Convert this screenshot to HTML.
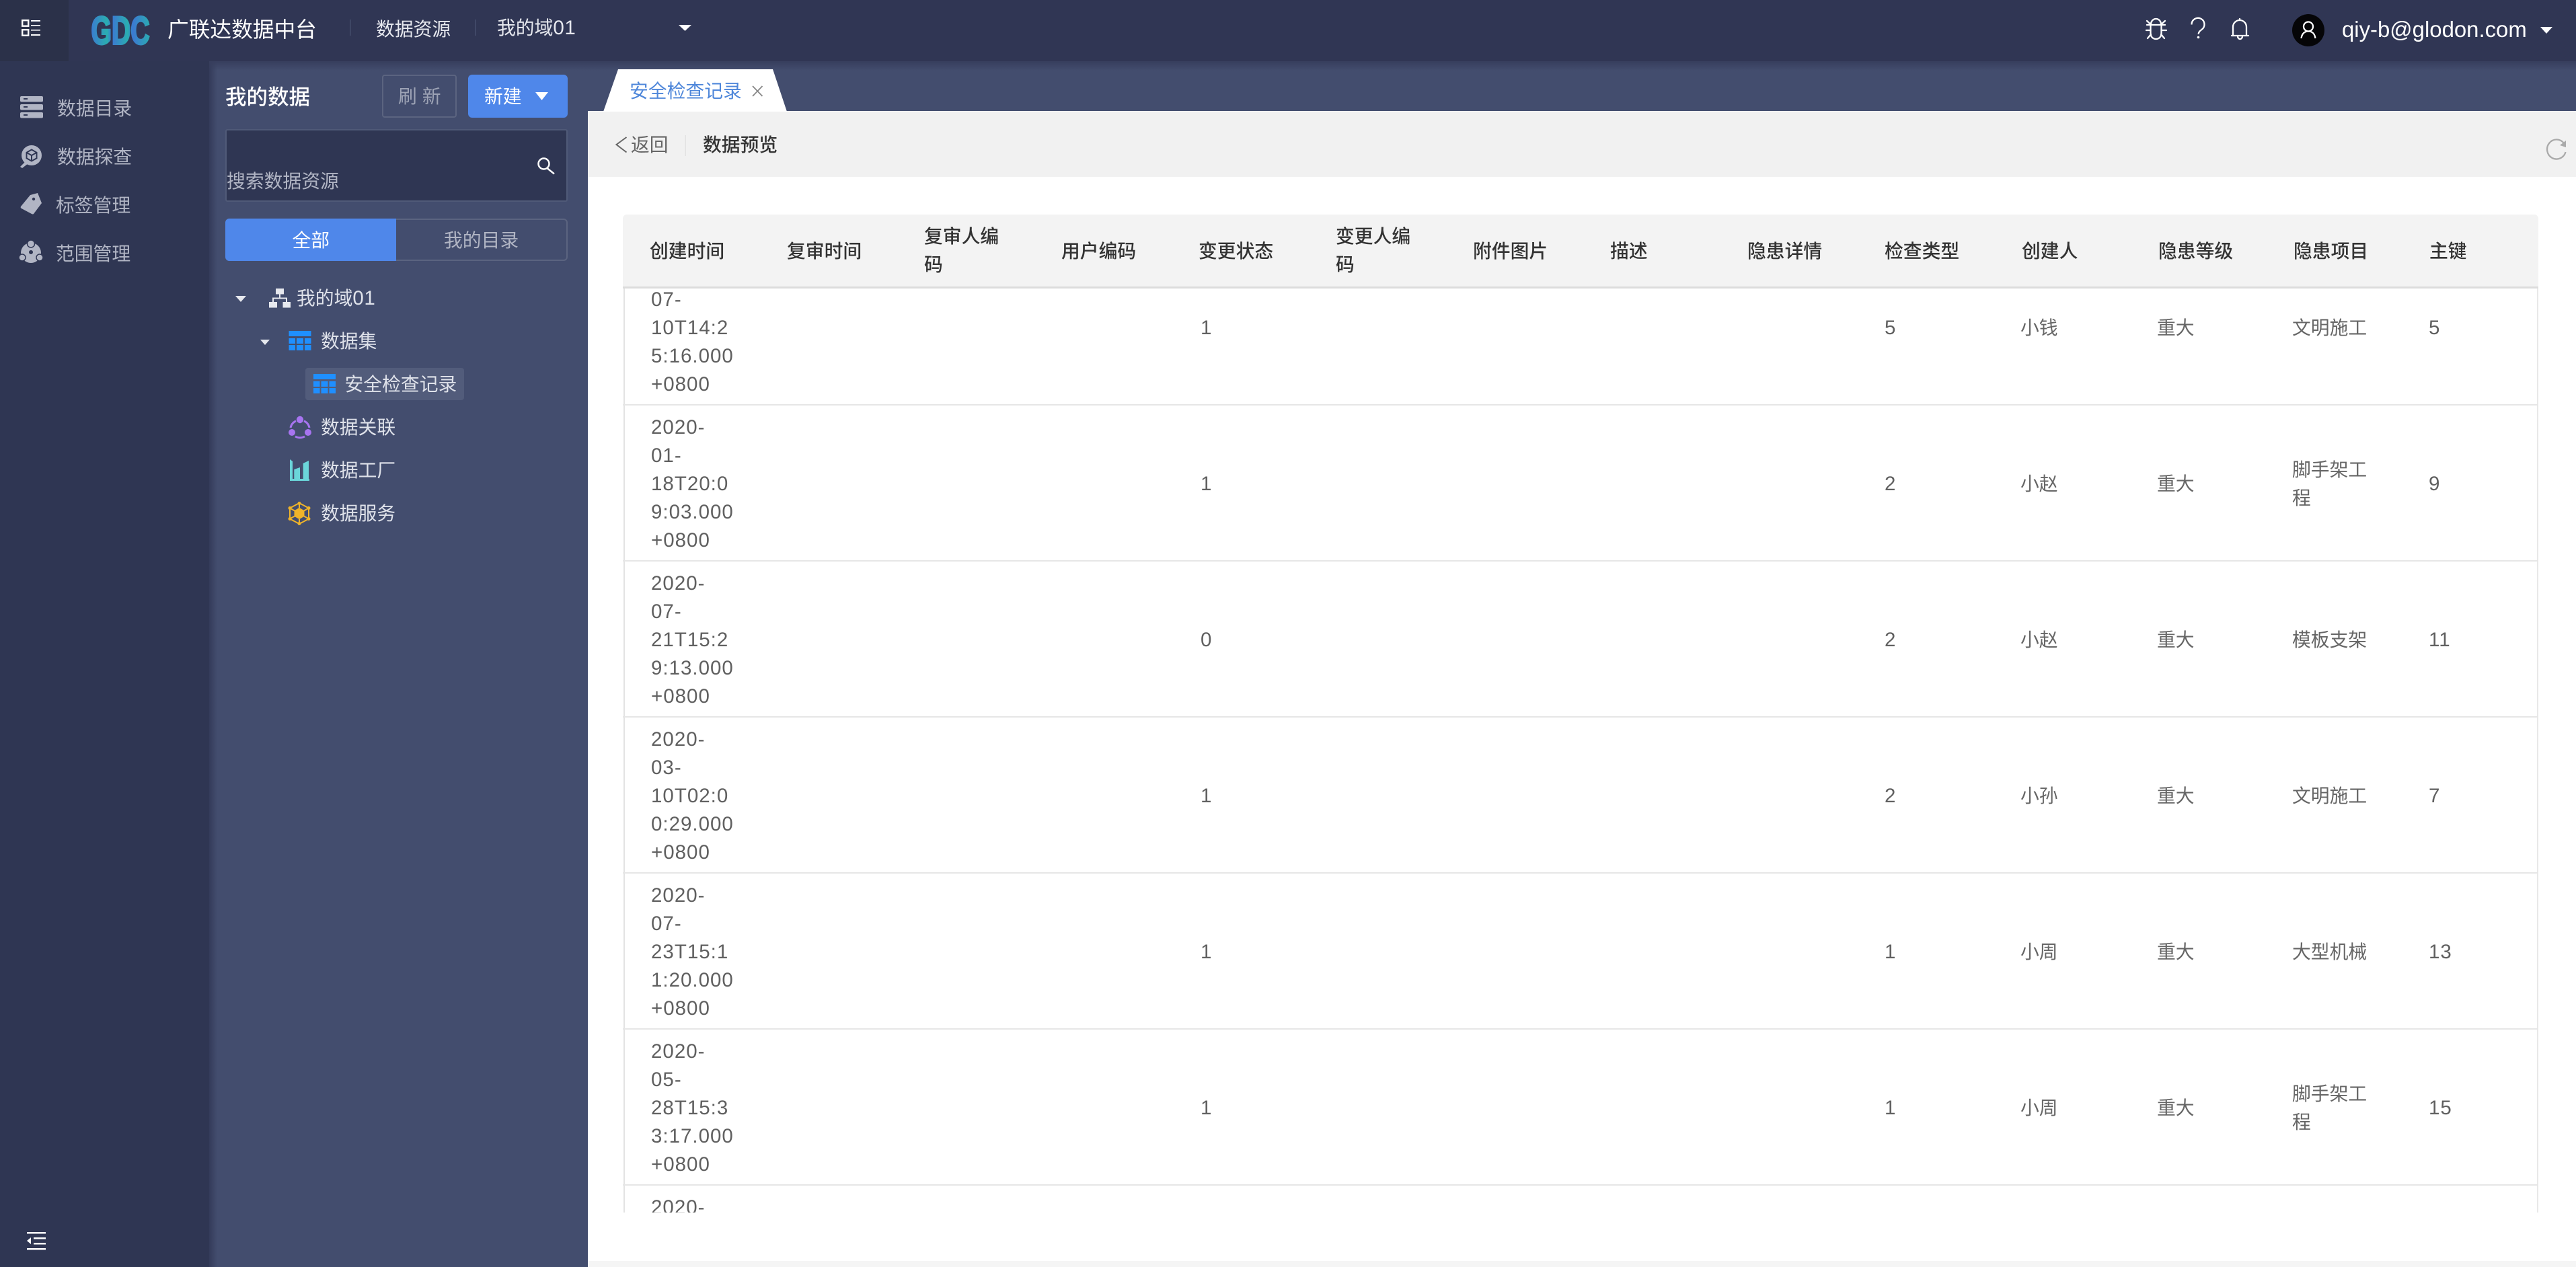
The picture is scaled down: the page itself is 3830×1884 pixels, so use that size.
<!DOCTYPE html>
<html lang="zh"><head><meta charset="utf-8"><title>广联达数据中台</title>
<style>
html,body{margin:0;padding:0;width:3830px;height:1884px;overflow:hidden;background:#fff}
body{position:relative;font-family:"Liberation Sans","Noto Sans CJK SC",sans-serif;font-size:27.8px}
.b{position:absolute}
.t{position:absolute;line-height:42px;white-space:nowrap;color:#666;transform:translateY(1px)}
.n{font-size:29.5px;letter-spacing:1px;color:#606060}
.h{color:#333;font-weight:500}
.s{color:#b1b5c4}
.w{color:#dfe2ea}
.l{font-size:29.5px;letter-spacing:.5px}
</style></head><body>
<div class="b" style="left:0;top:0;width:3830px;height:91px;background:#303654"></div>
<div class="b" style="left:0;top:0;width:102px;height:91px;background:#2b3149"></div>
<div class="b" style="left:0;top:91px;width:311px;height:1793px;background:#2f3653"></div>
<div class="b" style="left:311px;top:91px;width:3519px;height:74px;background:#434d6e"></div>
<div class="b" style="left:311px;top:165px;width:563px;height:1719px;background:#434d6e"></div>
<div class="b" style="left:311px;top:91px;width:12px;height:1793px;background:linear-gradient(90deg,#343b5a,#434d6e)"></div>
<div class="b" style="left:311px;top:91px;width:3519px;height:14px;background:linear-gradient(180deg,#373e5d,rgba(67,77,110,0))"></div>
<div class="b" style="left:874px;top:165px;width:2956px;height:98px;background:#f1f1f1"></div>
<div class="b" style="left:874px;top:1875px;width:2956px;height:9px;background:#f5f5f5"></div>

<div class="b" style="left:568px;top:111px;width:107px;height:60px;border:2px solid #5b6480;border-radius:4px"></div>
<div class="b" style="left:696px;top:111px;width:148px;height:64px;background:#4f87ea;border-radius:6px"></div>
<div class="b" style="left:335px;top:192px;width:505px;height:104px;background:#2f3653;border:2px solid #505a78;border-radius:3px"></div>
<div class="b" style="left:335px;top:325px;width:505px;height:59px;border:2px solid #5b6480;border-radius:6px"></div>
<div class="b" style="left:335px;top:325px;width:254px;height:63px;background:#4f87ea;border-radius:6px 0 0 6px"></div>
<div class="b" style="left:454px;top:547px;width:236px;height:48px;background:#525c7b;border-radius:4px"></div>

<div class="b" style="left:926px;top:319px;width:2848px;height:107px;background:#f3f3f3;border-radius:6px 6px 0 0"></div>
<div class="b" style="left:926px;top:426px;width:2848px;height:3px;background:#dcdcdc"></div>
<div class="b" style="left:926.5px;top:429px;width:2px;height:1374px;background:#e3e3e3"></div>
<div class="b" style="left:3772px;top:429px;width:2px;height:1374px;background:#e8e8e8"></div>
<div class="b" style="left:926px;top:601px;width:2848px;height:2px;background:#e6e6e6"></div>
<div class="b" style="left:926px;top:833px;width:2848px;height:2px;background:#e6e6e6"></div>
<div class="b" style="left:926px;top:1065px;width:2848px;height:2px;background:#e6e6e6"></div>
<div class="b" style="left:926px;top:1297px;width:2848px;height:2px;background:#e6e6e6"></div>
<div class="b" style="left:926px;top:1529px;width:2848px;height:2px;background:#e6e6e6"></div>
<div class="b" style="left:926px;top:1761px;width:2848px;height:2px;background:#e6e6e6"></div>

<svg class="b" style="left:0;top:0" width="3830" height="1884" viewBox="0 0 3830 1884">
<defs>
<linearGradient id="g" gradientUnits="userSpaceOnUse" x1="134" y1="0" x2="224" y2="0"><stop offset="0" stop-color="#3c78d2"/><stop offset=".28" stop-color="#2aaeb0"/><stop offset=".36" stop-color="#3c78d2"/><stop offset=".62" stop-color="#2aaeb0"/><stop offset=".7" stop-color="#3c78d2"/><stop offset="1" stop-color="#2aaeb0"/></linearGradient>
</defs>
<!-- menu -->
<g fill="none" stroke="#fff" stroke-width="2.4"><rect x="33.2" y="30.2" width="9" height="8.5"/><rect x="33.2" y="44.2" width="9" height="8.5"/></g>
<g fill="#fff"><rect x="46" y="30" width="14" height="2"/><rect x="46" y="37" width="14" height="1.6"/><rect x="46" y="44" width="14" height="1.6"/><rect x="46" y="51" width="14" height="2"/></g>
<!-- logo -->
<text x="135.5" y="65.5" font-family="Liberation Sans" font-weight="bold" font-size="58" textLength="87" lengthAdjust="spacingAndGlyphs" fill="url(#g)" stroke="url(#g)" stroke-width="3">GDC</text>
<g fill="#454d6c"><rect x="520" y="29" width="1.5" height="24"/><rect x="706" y="29" width="1.5" height="24"/></g>
<polygon points="1009,37 1028,37 1018.5,46" fill="#fff"/>
<polygon points="3777,40 3795,40 3786,50" fill="#fff"/>
<!-- bug -->
<g fill="none" stroke="#fff" stroke-width="2.3" stroke-linecap="round">
<path d="M3198 36a7.5 8 0 0 1 15 0"/><path d="M3192 37h27"/><path d="M3197.500 37v13a8 8 0 0 0 16 0v-13"/><path d="M3191 45h6.500M3213.500 45h7.500"/><path d="M3192 31l5.500 5M3219 31l-5.500 5"/><path d="M3193 57l5-6M3218 57l-5-6"/>
</g>
<!-- question -->
<path d="M3258.500 40a9.500 9.500 0 1 1 15 7.500c-3 2.200-4.800 3.800-4.800 7" fill="none" stroke="#fff" stroke-width="2.300" transform="translate(0,-3.500)"/>
<circle cx="3268.500" cy="55.500" r="1.800" fill="#fff"/>
<!-- bell -->
<g fill="none" stroke="#fff" stroke-width="2.300" stroke-linecap="round">
<path d="M3320 53V40a10 10 0 0 1 20 0v13"/><path d="M3318 53h25"/><path d="M3327 54a3.500 4 0 0 0 7 0"/><path d="M3330 30v-2"/>
</g>
<!-- avatar -->
<circle cx="3432" cy="45" r="24" fill="#050507"/>
<circle cx="3432" cy="39.500" r="7" fill="none" stroke="#fff" stroke-width="2.300"/>
<path d="M3421.500 57c1-7 5-10.500 10.500-10.500s9.500 3.500 10.500 10.500" fill="none" stroke="#fff" stroke-width="2.300"/>
<!-- sidebar -->
<g fill="#b1b5c4">
<rect x="30" y="143" width="34" height="8.500" rx="2"/><rect x="30" y="155" width="34" height="8.500" rx="2"/><rect x="30" y="167" width="34" height="8.500" rx="2"/>
<circle cx="47" cy="231" r="15"/><path d="M38 240l4 3-9 7-3-2z"/>
<path d="M31 307l14-17 11-3 6 15-12 16q-1 1-3 0l-15-8q-2-1-1-3z"/>
<circle cx="46" cy="376" r="15"/><circle cx="46" cy="362.500" r="5.500" stroke="#2f3653" stroke-width="1.500"/><circle cx="33" cy="383" r="5" stroke="#2f3653" stroke-width="1.500"/><circle cx="59" cy="383" r="5" stroke="#2f3653" stroke-width="1.500"/>
</g>
<g fill="#2f3653"><rect x="35" y="146" width="6" height="2"/><rect x="35" y="158" width="6" height="2"/><rect x="35" y="170" width="6" height="2"/><circle cx="46" cy="375" r="3"/><circle cx="50" cy="296" r="2.200"/></g>
<path d="M47 222.500l7.500 4.300v8.500l-7.500 4.200-7.500-4.200v-8.500zM39.500 226.800l7.500 4.300 7.500-4.300M47 231v8.500" fill="none" stroke="#2f3653" stroke-width="2"/>
<!-- bottom collapse -->
<g fill="#fff"><rect x="40" y="1832" width="28" height="2.500"/><rect x="50" y="1840" width="18" height="2.500"/><rect x="50" y="1848" width="18" height="2.500"/><rect x="40" y="1856" width="28" height="2.500"/><polygon points="46,1840 46,1850 40,1845"/></g>
<!-- buttons -->
<polygon points="796,137 815,137 805.500,149" fill="#fff"/>
<circle cx="808.500" cy="243.500" r="8" fill="none" stroke="#fff" stroke-width="2.500"/><path d="M814 250.500l10 8" fill="none" stroke="#fff" stroke-width="2.500"/>
<!-- tree -->
<polygon points="350,440 366,440 358,449" fill="#e6e8ee"/>
<polygon points="387,505 401,505 394,513" fill="#e6e8ee"/>
<g fill="#e6e8ee"><rect x="410" y="429" width="12" height="8.500"/><rect x="400" y="449" width="12" height="8.500"/><rect x="420.500" y="449" width="11.500" height="8.500"/><rect x="415" y="437" width="2" height="6"/><rect x="405" y="442.500" width="22" height="2"/><rect x="405" y="442.500" width="2" height="7"/><rect x="425" y="442.500" width="2" height="7"/></g>
<g fill="#1f8fff"><rect x="429.500" y="492" width="33" height="8"/><rect x="429.500" y="503" width="9.500" height="8"/><rect x="441" y="503" width="10" height="8"/><rect x="453" y="503" width="9.500" height="8"/><rect x="429.500" y="513" width="9.500" height="8"/><rect x="441" y="513" width="10" height="8"/><rect x="453" y="513" width="9.500" height="8"/>
<rect x="466" y="556" width="33" height="8"/><rect x="466" y="567" width="9.500" height="8"/><rect x="477.500" y="567" width="10" height="8"/><rect x="489.500" y="567" width="9.500" height="8"/><rect x="466" y="577" width="9.500" height="8"/><rect x="477.500" y="577" width="10" height="8"/><rect x="489.500" y="577" width="9.500" height="8"/></g>
<!-- purple -->
<g fill="#a774f0"><circle cx="446" cy="624" r="5.200"/><circle cx="434" cy="643" r="5"/><circle cx="458" cy="643" r="5"/></g>
<g fill="none" stroke="#a774f0" stroke-width="3"><path d="M440 626a14 14 0 0 0-8 10"/><path d="M452 626a14 14 0 0 1 8 10"/><path d="M439 649a14 14 0 0 0 14 0"/></g>
<!-- teal -->
<path d="M431 683l4 3v26h2.300v-14l8.700-3v17h4.700v-23l8.300-4v27h1v3h-29z" fill="#6bd5da"/>
<!-- gold -->
<g stroke="#f0b429" stroke-width="2" fill="none"><path d="M445 748l14 7.500v16l-14 7.500-14-7.500v-16zM445 748v7M459 755.500l-7 4M459 771.500l-7-4M445 779v-7M431 771.500l7-4M431 755.500l7 4"/></g>
<path d="M445 755.500l7 4v8l-7 4-7-4v-8z" fill="#f0b429" stroke="#f0b429"/>
<g fill="#f0b429"><circle cx="445" cy="748.500" r="2.500"/><circle cx="459" cy="755.500" r="2.500"/><circle cx="459" cy="771.500" r="2.500"/><circle cx="445" cy="778.500" r="2.500"/><circle cx="431" cy="771.500" r="2.500"/><circle cx="431" cy="755.500" r="2.500"/></g>
<!-- tab -->
<polygon points="919,103 1149,103 1170,166 897,166" fill="#fff"/>
<path d="M1119 128l14.500 15M1133.500 128l-14.500 15" fill="none" stroke="#888" stroke-width="1.800"/>
<path d="M931.500 204l-15 11 15 11.500" fill="none" stroke="#666" stroke-width="2"/>
<rect x="1018.500" y="201" width="1.500" height="31" fill="#e2e2e2"/>
<g fill="none" stroke="#aaa" stroke-width="2.300"><path d="M3812 213a14 14.500 0 1 0 2.500 13"/></g><polygon points="3815,209 3815,219 3806,216" fill="#aaa"/>
</svg>

<div class="t" style="left:249px;top:22px;font-size:31.7px;color:#fff">广联达数据中台</div>
<div class="t" style="left:559px;top:22px;color:#e6e8ee">数据资源</div>
<div class="t" style="left:739px;top:20px;color:#e6e8ee">我的域<span class="l">01</span></div>
<div class="t" style="left:3482px;top:22px;font-size:32.900px;color:#fff">qiy-b@glodon.com</div>

<div class="t s" style="left:85px;top:140px">数据目录</div>
<div class="t s" style="left:85px;top:212px">数据探查</div>
<div class="t s" style="left:83px;top:284px">标签管理</div>
<div class="t s" style="left:83px;top:356px">范围管理</div>

<div class="t" style="left:335px;top:122px;font-size:31.500px;font-weight:500;color:#fff">我的数据</div>
<div class="t" style="left:592px;top:122px;color:#9da3b5;letter-spacing:8px">刷新</div>
<div class="t" style="left:720px;top:122px;color:#fff">新建</div>
<div class="t" style="left:337px;top:248px;color:#b1b5c4">搜索数据资源</div>
<div class="t" style="left:434.500px;top:336px;color:#fff">全部</div>
<div class="t" style="left:660px;top:336px;color:#b1b5c4">我的目录</div>

<div class="t w" style="left:441px;top:422px">我的域<span class="l">01</span></div>
<div class="t w" style="left:477px;top:486px">数据集</div>
<div class="t w" style="left:512.500px;top:550px">安全检查记录</div>
<div class="t w" style="left:477px;top:614px">数据关联</div>
<div class="t w" style="left:477px;top:678px">数据工厂</div>
<div class="t w" style="left:477px;top:742px">数据服务</div>

<div class="t" style="left:936px;top:114px;color:#4f87da">安全检查记录</div>
<div class="t" style="left:938px;top:194px;color:#666">返回</div>
<div class="t" style="left:1045px;top:194px;color:#333;font-weight:500">数据预览</div>

<div class="t h" style="left:966px;top:352px">创建时间</div>
<div class="t h" style="left:1170px;top:352px">复审时间</div>
<div class="t h" style="left:1374px;top:330px">复审人编<br>码</div>
<div class="t h" style="left:1578px;top:352px">用户编码</div>
<div class="t h" style="left:1782px;top:352px">变更状态</div>
<div class="t h" style="left:1986px;top:330px">变更人编<br>码</div>
<div class="t h" style="left:2190px;top:352px">附件图片</div>
<div class="t h" style="left:2394px;top:352px">描述</div>
<div class="t h" style="left:2598px;top:352px">隐患详情</div>
<div class="t h" style="left:2802px;top:352px">检查类型</div>
<div class="t h" style="left:3006px;top:352px">创建人</div>
<div class="t h" style="left:3209px;top:352px">隐患等级</div>
<div class="t h" style="left:3410px;top:352px">隐患项目</div>
<div class="t h" style="left:3612px;top:352px">主键</div>

<div class="t n" style="left:968px;top:424px">07-<br>10T14:2<br>5:16.000<br>+0800</div>
<div class="t n" style="left:1785px;top:466px">1</div>
<div class="t n" style="left:2802px;top:466px">5</div>
<div class="t" style="left:3004px;top:466px">小钱</div>
<div class="t" style="left:3207px;top:466px">重大</div>
<div class="t" style="left:3408px;top:466px">文明施工</div>
<div class="t n" style="left:3611px;top:466px">5</div>

<div class="t n" style="left:968px;top:614px">2020-<br>01-<br>18T20:0<br>9:03.000<br>+0800</div>
<div class="t n" style="left:1785px;top:698px">1</div>
<div class="t n" style="left:2802px;top:698px">2</div>
<div class="t" style="left:3004px;top:698px">小赵</div>
<div class="t" style="left:3207px;top:698px">重大</div>
<div class="t" style="left:3408px;top:677px">脚手架工<br>程</div>
<div class="t n" style="left:3611px;top:698px">9</div>

<div class="t n" style="left:968px;top:846px">2020-<br>07-<br>21T15:2<br>9:13.000<br>+0800</div>
<div class="t n" style="left:1785px;top:930px">0</div>
<div class="t n" style="left:2802px;top:930px">2</div>
<div class="t" style="left:3004px;top:930px">小赵</div>
<div class="t" style="left:3207px;top:930px">重大</div>
<div class="t" style="left:3408px;top:930px">模板支架</div>
<div class="t n" style="left:3611px;top:930px">11</div>

<div class="t n" style="left:968px;top:1078px">2020-<br>03-<br>10T02:0<br>0:29.000<br>+0800</div>
<div class="t n" style="left:1785px;top:1162px">1</div>
<div class="t n" style="left:2802px;top:1162px">2</div>
<div class="t" style="left:3004px;top:1162px">小孙</div>
<div class="t" style="left:3207px;top:1162px">重大</div>
<div class="t" style="left:3408px;top:1162px">文明施工</div>
<div class="t n" style="left:3611px;top:1162px">7</div>

<div class="t n" style="left:968px;top:1310px">2020-<br>07-<br>23T15:1<br>1:20.000<br>+0800</div>
<div class="t n" style="left:1785px;top:1394px">1</div>
<div class="t n" style="left:2802px;top:1394px">1</div>
<div class="t" style="left:3004px;top:1394px">小周</div>
<div class="t" style="left:3207px;top:1394px">重大</div>
<div class="t" style="left:3408px;top:1394px">大型机械</div>
<div class="t n" style="left:3611px;top:1394px">13</div>

<div class="t n" style="left:968px;top:1542px">2020-<br>05-<br>28T15:3<br>3:17.000<br>+0800</div>
<div class="t n" style="left:1785px;top:1626px">1</div>
<div class="t n" style="left:2802px;top:1626px">1</div>
<div class="t" style="left:3004px;top:1626px">小周</div>
<div class="t" style="left:3207px;top:1626px">重大</div>
<div class="t" style="left:3408px;top:1605px">脚手架工<br>程</div>
<div class="t n" style="left:3611px;top:1626px">15</div>

<div class="b" style="left:928px;top:1763px;width:400px;height:40px;overflow:hidden"><div class="t n" style="left:40px;top:11px">2020-</div></div>
</body></html>
